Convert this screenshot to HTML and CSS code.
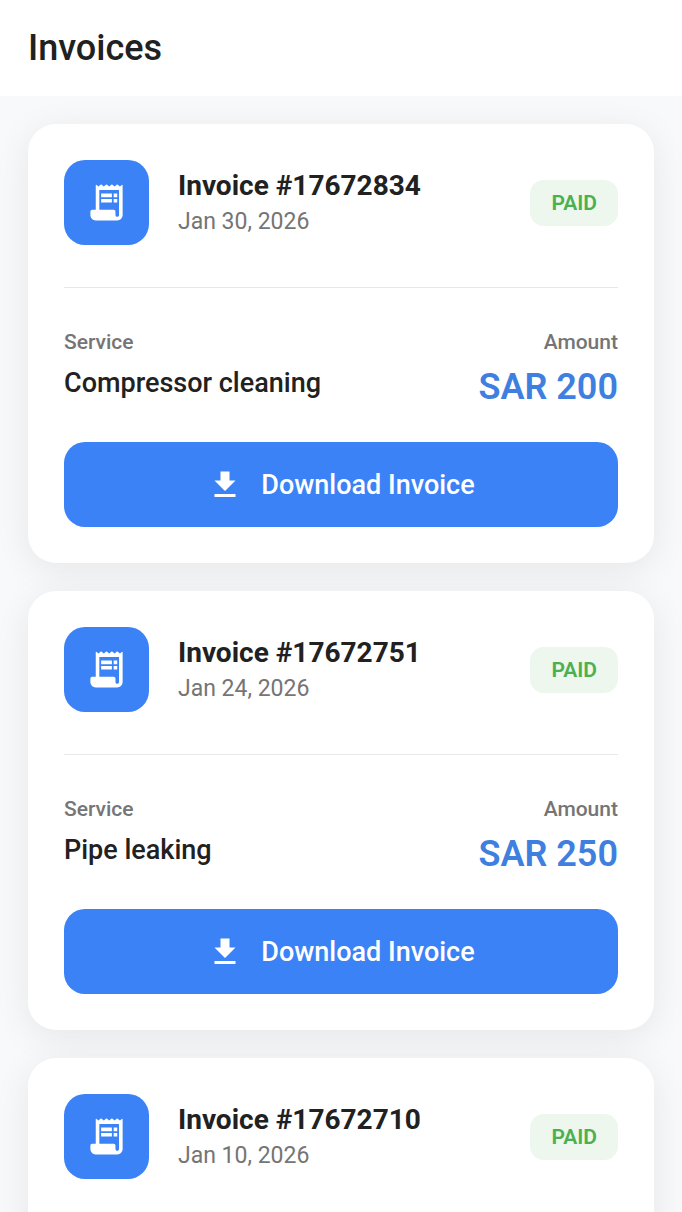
FILE: index.html
```html
<!DOCTYPE html>
<html lang="en">
  <head>
    <meta charset="UTF-8" />
    <meta name="viewport" content="width=device-width, initial-scale=1.0" />
    <title>Invoices</title>
    <link rel="stylesheet" href="styles.css">
  </head>
  <body>
    <!-- shared icons -->
    <svg class="sprite" aria-hidden="true">
      <symbol id="receipt" viewBox="0 0 24 24">
        <path d="M6 2.5q0-.7.65-.15l.5.5q.35.35.7 0l.8-.7q.35-.3.7 0l.8.7q.35.35.7 0l.8-.7q.35-.3.7 0l.8.7q.35.35.7 0l.8-.7q.35-.3.7 0l.8.7q.35.35.7 0l.8-.7q.35-.3.7 0l.8.7q.35.35.7 0l.5-.5Q21 1.8 21 2.5V19c0 1.66-1.34 3-3 3H6c-1.66 0-3-1.34-3-3v-2q0-1 1-1h2zM19 19V5H8v11h8q1 0 1 1v2c0 .55.45 1 1 1s1-.45 1-1z" />
        <path d="M9 7h6v2H9zM16 7h2v2h-2zM9 10h6v2H9zM16 10h2v2h-2z" />
      </symbol>
      <symbol id="download" viewBox="0 0 24 24">
        <path d="M19 9h-4V3H9v6H5l7 7 7-7zM5 18v2h14v-2H5z" />
      </symbol>
    </svg>

    <header class="topbar">
      <h1>Invoices</h1>
    </header>

    <main class="list">
      <article class="card">
        <div class="card-head">
          <div class="card-icon"><svg><use href="#receipt" /></svg></div>
          <div class="card-title">
            <h2>Invoice #17672834</h2>
            <p>Jan 30, 2026</p>
          </div>
          <span class="badge">PAID</span>
        </div>
        <div class="details">
          <div>
            <p class="label">Service</p>
            <p class="service">Compressor cleaning</p>
          </div>
          <div class="right">
            <p class="label">Amount</p>
            <p class="amount">SAR 200</p>
          </div>
        </div>
        <button class="download" type="button">
          <svg><use href="#download" /></svg>
          Download Invoice
        </button>
      </article>

      <article class="card">
        <div class="card-head">
          <div class="card-icon"><svg><use href="#receipt" /></svg></div>
          <div class="card-title">
            <h2>Invoice #17672751</h2>
            <p>Jan 24, 2026</p>
          </div>
          <span class="badge">PAID</span>
        </div>
        <div class="details">
          <div>
            <p class="label">Service</p>
            <p class="service">Pipe leaking</p>
          </div>
          <div class="right">
            <p class="label">Amount</p>
            <p class="amount">SAR 250</p>
          </div>
        </div>
        <button class="download" type="button">
          <svg><use href="#download" /></svg>
          Download Invoice
        </button>
      </article>

      <article class="card">
        <div class="card-head">
          <div class="card-icon"><svg><use href="#receipt" /></svg></div>
          <div class="card-title">
            <h2>Invoice #17672710</h2>
            <p>Jan 10, 2026</p>
          </div>
          <span class="badge">PAID</span>
        </div>
      </article>
    </main>
  </body>
</html>
```

FILE: styles.css
```css
* {
  margin: 0;
  padding: 0;
  box-sizing: border-box;
}
body {
  display: flex;
  flex-direction: column;
  height: 100vh;
  background-color: #f8f9fb;
  color: #212121;
  font-family: Roboto, "Liberation Sans", sans-serif;
}
.sprite {
  display: none;
}
svg {
  fill: #fff;
}
.topbar {
  padding: 24px 28px;
  background-color: #fff;
}
.topbar h1 {
  font-size: 36px;
  font-weight: 500;
  line-height: 48px;
}

/* only the list scrolls */
.list {
  flex: 1;
  min-height: 0;
  display: flex;
  flex-direction: column;
  gap: 28px;
  padding: 28px;
  overflow-y: auto;
  scrollbar-width: none;
}
.card {
  flex-shrink: 0;
  padding: 36px;
  border-radius: 28px;
  background-color: #fff;
  box-shadow: 0 7px 36px rgba(0, 0, 0, 0.08);
}
.card-head {
  display: flex;
  align-items: center;
  gap: 29px;
  padding-bottom: 42px;
  border-bottom: 1px solid #e8e8e8;
}
.card-icon {
  display: flex;
  align-items: center;
  justify-content: center;
  width: 85px;
  height: 85px;
  border-radius: 21px;
  background-color: #3b82f6;
}
.card-icon svg {
  width: 43px;
  height: 43px;
}
.card-title {
  flex: 1;
}
.card-title h2 {
  font-size: 28px;
  font-weight: 700;
  line-height: 38px;
}
.card-title p {
  color: #757575;
  font-size: 23px;
  line-height: 34px;
}
.badge {
  padding: 11px 21px;
  border-radius: 14px;
  background-color: #edf7ee;
  color: #4caf50;
  font-size: 21px;
  font-weight: 600;
  line-height: 24px;
}

.details {
  display: flex;
  justify-content: space-between;
  padding: 40px 0 34px;
}
.right {
  text-align: right;
}
.label {
  margin-bottom: 10px;
  color: #757575;
  font-size: 21px;
  font-weight: 500;
  line-height: 28px;
}
.service {
  font-size: 27px;
  font-weight: 500;
  line-height: 34px;
}
.amount {
  color: #3f7fe0;
  font-size: 36px;
  font-weight: 600;
  line-height: 42px;
}
.download {
  display: flex;
  align-items: center;
  justify-content: center;
  gap: 18px;
  width: 100%;
  height: 85px;
  border: none;
  border-radius: 21px;
  background-color: #3b82f6;
  color: #fff;
  font-family: inherit;
  font-size: 27px;
  font-weight: 500;
  cursor: pointer;
}
.download svg {
  width: 36px;
  height: 36px;
}
```
